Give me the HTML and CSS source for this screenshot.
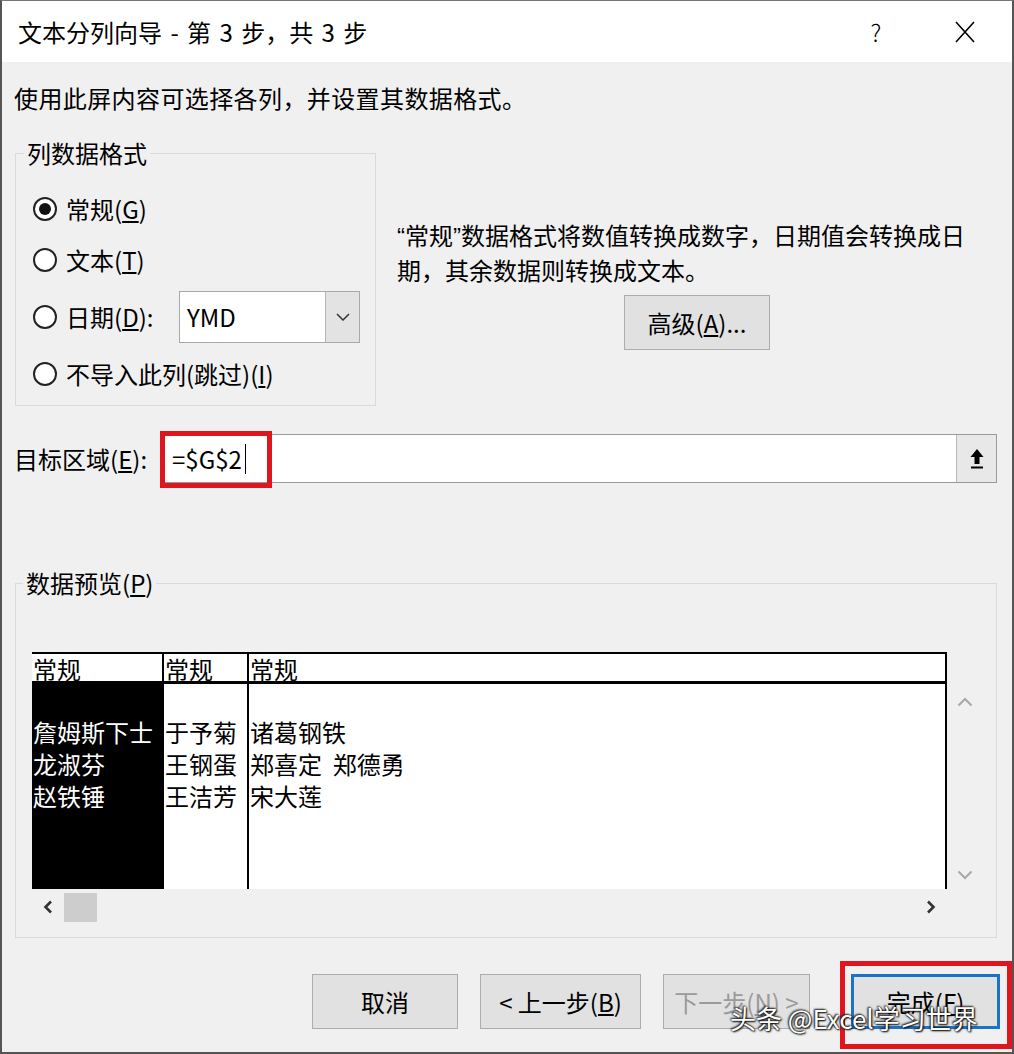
FILE: index.html
```html
<!DOCTYPE html>
<html lang="zh-CN">
<head>
<meta charset="utf-8">
<title>文本分列向导</title>
<link rel="stylesheet" href="styles.css">
</head>
<body>
<div class="dialog">
  <div class="titlebar">
    <div class="title">文本分列向导 - 第 3 步，共 3 步</div>
    <div class="title-actions">
      <span class="help">?</span>
      <svg class="close" width="20" height="22" viewBox="0 0 20 22"><path d="M1 1 L19 21 M19 1 L1 21" stroke="#000" stroke-width="1.6" fill="none"/></svg>
    </div>
  </div>
  <div class="body">
    <p class="intro">使用此屏内容可选择各列，并设置其数据格式。</p>
    <div class="top-row">
      <div class="group format-group">
        <span class="group-title">列数据格式</span>
        <div class="radio-row"><span class="radio checked"></span><span>常规(<u>G</u>)</span></div>
        <div class="radio-row"><span class="radio"></span><span>文本(<u>T</u>)</span></div>
        <div class="radio-row date-row">
          <span class="radio"></span><span class="date-label">日期(<u>D</u>):</span>
          <div class="combo">
            <span class="combo-value">YMD</span>
            <span class="combo-btn"><svg width="14" height="8" viewBox="0 0 14 8"><path d="M1 1 L7 7 L13 1" stroke="#333" stroke-width="1.5" fill="none"/></svg></span>
          </div>
        </div>
        <div class="radio-row"><span class="radio"></span><span>不导入此列(跳过)(<u>I</u>)</span></div>
      </div>
      <div class="desc-col">
        <p class="desc"><span class="q">“</span>常规<span class="q">”</span>数据格式将数值转换成数字，日期值会转换成日<br>期，其余数据则转换成文本。</p>
        <button class="btn adv">高级(<u>A</u>)...</button>
      </div>
    </div>
    <div class="target-row">
      <span class="target-label">目标区域(<u>E</u>):</span>
      <div class="target-input">
        <span class="target-value">=$G$2</span><span class="caret"></span>
        <span class="collapse-btn"><svg width="16" height="22" viewBox="0 0 16 22"><path d="M8 1 L1.5 9 H5.5 V16 H10.5 V9 H14.5 Z" fill="#000"/><rect x="2" y="18.5" width="12" height="2" fill="#000"/></svg></span>
        <span class="mark-box target-mark"></span>
      </div>
    </div>
    <div class="group preview-group">
      <span class="group-title">数据预览(<u>P</u>)</span>
      <div class="preview">
        <div class="ptable">
          <div class="pcol pcol-sel">
            <div class="phead">常规</div>
            <div class="pbody">
              <div class="pcell"></div>
              <div class="pcell">詹姆斯下士</div>
              <div class="pcell">龙淑芬</div>
              <div class="pcell">赵铁锤</div>
            </div>
          </div>
          <div class="pcol pcol-2">
            <div class="phead">常规</div>
            <div class="pbody">
              <div class="pcell"></div>
              <div class="pcell">于予菊</div>
              <div class="pcell">王钢蛋</div>
              <div class="pcell">王洁芳</div>
            </div>
          </div>
          <div class="pcol pcol-3">
            <div class="phead">常规</div>
            <div class="pbody">
              <div class="pcell"></div>
              <div class="pcell">诸葛钢铁</div>
              <div class="pcell">郑喜定&nbsp;&nbsp;郑德勇</div>
              <div class="pcell">宋大莲</div>
            </div>
          </div>
        </div>
        <div class="vscroll">
          <svg width="16" height="10" viewBox="0 0 16 10"><path d="M1.5 8.5 L8 2 L14.5 8.5" stroke="#a8a8a8" stroke-width="2" fill="none"/></svg>
          <svg width="16" height="10" viewBox="0 0 16 10"><path d="M1.5 1.5 L8 8 L14.5 1.5" stroke="#a8a8a8" stroke-width="2" fill="none"/></svg>
        </div>
        <div class="hscroll">
          <svg width="10" height="14" viewBox="0 0 10 14"><path d="M8 1.5 L2.5 7 L8 12.5" stroke="#333" stroke-width="2.6" fill="none"/></svg>
          <span class="thumb"></span>
          <svg class="hs-right" width="10" height="14" viewBox="0 0 10 14"><path d="M2 1.5 L7.5 7 L2 12.5" stroke="#333" stroke-width="2.6" fill="none"/></svg>
        </div>
      </div>
    </div>
    <div class="buttons">
      <button class="btn">取消</button>
      <button class="btn prev">&lt; 上一步(<u>B</u>)</button>
      <button class="btn next" disabled>下一步(<u>N</u>) &gt;</button>
      <button class="btn finish">完成(<u>F</u>)<span class="mark-box finish-mark"></span></button>
    </div>
  </div>
  <div class="watermark">头条 @Excel学习世界</div>
</div>
</body>
</html>
```

FILE: styles.css
```css
html, body {
  margin: 0;
  padding: 0;
}

body {
  width: 1014px;
  height: 1054px;
  overflow: hidden;
  background: #f0f0f0;
}

.dialog {
  position: relative;
  width: 1014px;
  height: 1054px;
  box-sizing: border-box;
  border-left: 2px solid #555;
  border-right: 2px solid #555;
  border-bottom: 2px solid #555;
  border-top: 1px solid #777;
  background: #f0f0f0;
  font-family: "Noto Sans CJK SC", "Noto Sans", sans-serif;
  font-size: 24px;
  color: #000;
}

u {
  text-decoration: underline;
  text-underline-offset: 2px;
}

/* title bar */
.titlebar {
  height: 61px;
  background: #fff;
  display: flex;
  align-items: center;
  padding-left: 16px;
  padding-right: 37px;
}

.title {
  line-height: 30px;
  word-spacing: 3px;
}

.title-actions {
  margin-left: auto;
  display: flex;
  align-items: center;
}

.help {
  width: 40px;
  text-align: center;
  font-weight: 300;
  line-height: 30px;
  margin-right: 59px;
}

.close {
  display: block;
}

/* body */
.body {
  padding: 0 15px 0 13px;
}

.intro {
  margin: 21px 0 0 -1px;
  line-height: 30px;
  letter-spacing: 0.4px;
}

.top-row {
  display: flex;
  margin-top: 40px;
}

.group {
  position: relative;
  box-sizing: border-box;
  border: 1px solid #dadada;
}

.group-title {
  position: absolute;
  top: -16px;
  left: 8px;
  padding: 0 3px;
  line-height: 30px;
  background: #f0f0f0;
}

.format-group {
  width: 361px;
  padding: 35px 0 11px 17px;
  display: flex;
  flex-direction: column;
  gap: 11px;
}

.radio-row {
  display: flex;
  align-items: center;
  height: 40px;
  line-height: 30px;
}

.date-row {
  height: 52px;
}

.radio {
  width: 24px;
  height: 24px;
  box-sizing: border-box;
  border: 2px solid #222;
  border-radius: 50%;
  margin-right: 9px;
  display: flex;
  align-items: center;
  justify-content: center;
  background: #fff;
}

.radio.checked::after {
  content: "";
  width: 12px;
  height: 12px;
  border-radius: 50%;
  background: #111;
}

.date-label {
  width: 113px;
}

.combo {
  width: 181px;
  height: 52px;
  box-sizing: border-box;
  border: 1px solid #a9a9a9;
  background: #fff;
  display: flex;
  align-items: stretch;
}

.combo-value {
  flex: 1;
  padding-left: 7px;
  line-height: 50px;
}

.combo-btn {
  width: 33px;
  background: #e3e3e3;
  border-left: 1px solid #b5b5b5;
  display: flex;
  align-items: center;
  justify-content: center;
}

.desc-col {
  flex: 1;
  margin-left: 21px;
  padding-top: 65px;
  display: flex;
  flex-direction: column;
}

.desc {
  margin: 0;
  line-height: 33px;
}

.q {
  font-family: "Liberation Sans", sans-serif;
}

.btn {
  font-family: inherit;
  font-size: 24px;
  color: #000;
  background: #e1e1e1;
  border: 1px solid #adadad;
  height: 55px;
  padding: 0;
  box-sizing: border-box;
  line-height: 30px;
}

.adv {
  width: 146px;
  margin: 9px auto 0;
}

/* target */
.target-row {
  display: flex;
  align-items: center;
  margin-top: 28px;
}

.target-label {
  width: 146px;
  margin-left: -1px;
  line-height: 30px;
}

.target-input {
  position: relative;
  flex: 1;
  height: 49px;
  box-sizing: border-box;
  border: 1px solid #9a9a9a;
  background: #fff;
  display: flex;
  align-items: center;
  padding-left: 11px;
}

.target-value {
  line-height: 30px;
}

.caret {
  width: 1px;
  height: 30px;
  background: #000;
  margin-left: 3px;
}

.collapse-btn {
  margin-left: auto;
  width: 39px;
  height: 47px;
  background: #e8e8e8;
  border-left: 1px solid #b8b8b8;
  display: flex;
  align-items: center;
  justify-content: center;
}

.mark-box {
  position: absolute;
  box-sizing: border-box;
  border: 5px solid #e0161f;
  pointer-events: none;
}

.target-mark {
  left: -1px;
  top: -4px;
  width: 112px;
  height: 57px;
}

/* preview */
.preview-group {
  margin-top: 100px;
  padding: 68px 0 14px 16px;
}

.preview-group .group-title {
  left: 7px;
}

.preview {
  display: grid;
  grid-template-columns: 915px 36px;
  grid-template-rows: 237px 34px;
}

.ptable {
  display: flex;
  background: #fff;
  box-sizing: border-box;
  border-top: 2px solid #000;
  border-right: 2px solid #000;
  overflow: hidden;
}

.pcol {
  display: flex;
  flex-direction: column;
  box-sizing: border-box;
}

.pcol-sel {
  width: 132px;
  border-right: 2px solid #000;
}

.pcol-2 {
  width: 85px;
  border-right: 2px solid #000;
}

.pcol-3 {
  flex: 1;
}

.phead {
  height: 30px;
  box-sizing: border-box;
  padding: 1px 0 0 1px;
  line-height: 28px;
  background: #fff;
  color: #000;
  border-bottom: 3px solid #000;
  flex: none;
}

.pbody {
  flex: 1;
}

.pcol-sel .pbody {
  background: #000;
  color: #fff;
}

.pcell {
  height: 32px;
  line-height: 32px;
  padding-left: 1px;
  white-space: nowrap;
}

.vscroll {
  display: flex;
  flex-direction: column;
  align-items: center;
  justify-content: space-between;
  padding: 45px 0 9px;
}

.hscroll {
  display: flex;
  align-items: center;
  padding: 2px 11px 0 11px;
}

.thumb {
  width: 33px;
  height: 29px;
  margin-left: 11px;
  background: #cdcdcd;
}

.hs-right {
  margin-left: auto;
}

/* buttons */
.buttons {
  display: flex;
  justify-content: flex-end;
  gap: 22px;
  margin-top: 36px;
  margin-right: -3px;
}

.buttons .btn:nth-child(1) {
  width: 146px;
}

.prev {
  width: 161px;
}

.next {
  width: 147px;
  color: #9a9a9a;
}

.finish {
  position: relative;
  width: 149px;
  margin-left: 19px;
  border: 3px solid #1a73c8;
}

.finish-mark {
  left: -14px;
  top: -16px;
  width: 172px;
  height: 88px;
}

.watermark {
  position: absolute;
  left: 728px;
  top: 1000px;
  font-size: 26px;
  line-height: 34px;
  color: #fff;
  white-space: nowrap;
  text-shadow: 0 0 2px #000, 1px 1px 2px #000, -1px -1px 2px #333;
}
```
